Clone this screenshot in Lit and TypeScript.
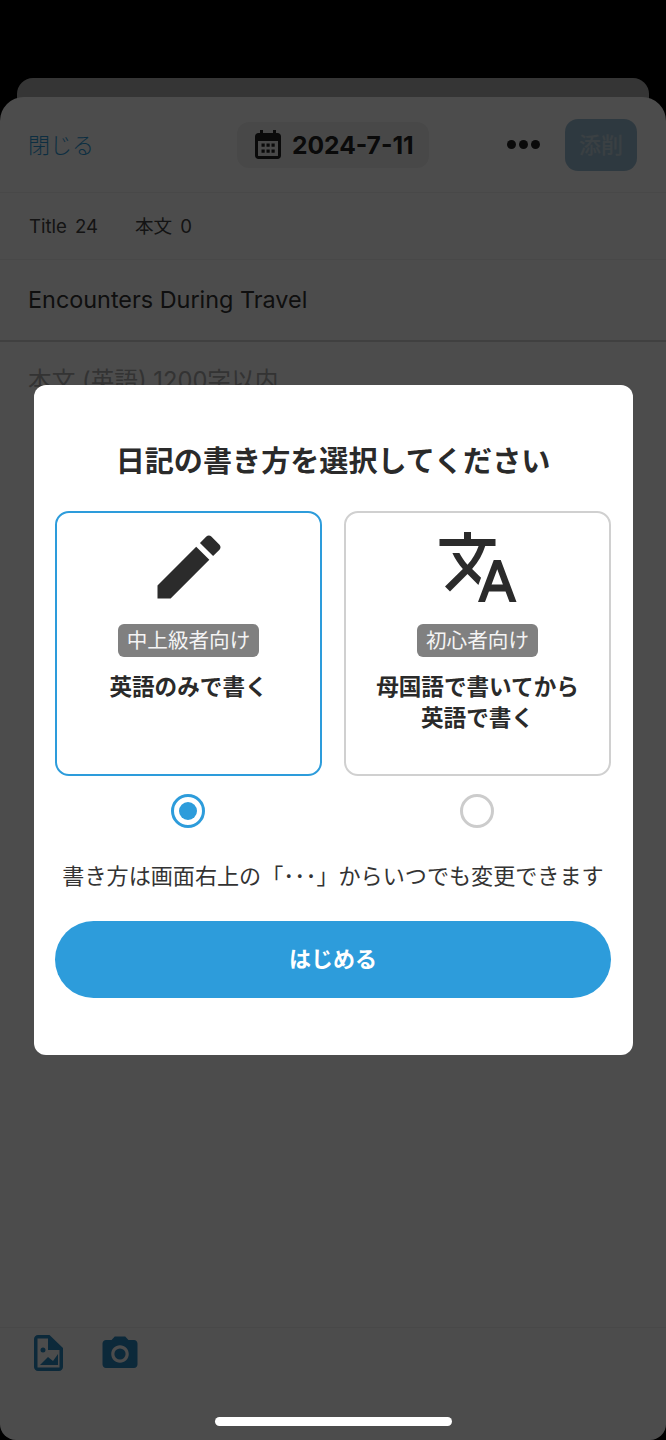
import {LitElement, html, css, svg} from 'lit';
import {customElement, state} from 'lit/decorators.js';
import {classMap} from 'lit/directives/class-map.js';

const editIcon = svg`<path d="M3 17.25V21h3.75L17.81 9.94l-3.75-3.75L3 17.25zM20.71 7.04c.39-.39.39-1.02 0-1.41l-2.34-2.34c-.39-.39-1.02-.39-1.41 0l-1.83 1.83 3.75 3.75 1.83-1.83z"/>`;
const translateIcon = svg`<path d="M12.87 15.07l-2.54-2.51.03-.03c1.74-1.94 2.98-4.17 3.71-6.53H17V4h-7V2H8v2H1v1.99h11.17C11.5 7.92 10.44 9.75 9 11.35 8.07 10.32 7.3 9.19 6.69 8h-2c.73 1.63 1.73 3.17 2.98 4.56l-5.09 5.02L4 19l5-5 3.11 3.11.76-2.04zM18.5 10h-2L12 22h2l1.12-3h4.75L21 22h2l-4.5-12zm-2.62 7l1.62-4.33L19.12 17h-3.24z"/>`;

const options = [
  {id: 'english', badge: '中上級者向け', label: ['英語のみで書く'], icon: editIcon},
  {id: 'native', badge: '初心者向け', label: ['母国語で書いてから', '英語で書く'], icon: translateIcon},
];

@customElement('app-root')
export class AppRoot extends LitElement {
  @state()
  selected = 'english';

  static styles = css`
    :host {
      display: block;
      font-family: Inter, "Noto Sans CJK JP", sans-serif;
      color: #222;
    }
    .stage {
      position: relative;
      height: 1440px;
      padding-top: 78px;
      box-sizing: border-box;
      background: #000;
      overflow: hidden;
    }
    .back-card {
      height: 40px;
      margin: 0 17px -21px;
      border-radius: 16px 16px 0 0;
      background: #b2b2b2;
    }
    .sheet {
      display: flex;
      flex-direction: column;
      height: 1343px;
      border-radius: 24px 24px 16px 16px;
      background: #fff;
    }
    .header {
      display: flex;
      align-items: center;
      height: 96px;
      padding: 0 29px 0 28px;
      border-bottom: 1px solid #f0f0f0;
      box-sizing: border-box;
    }
    .close {
      width: 209px;
      padding-bottom: 4px;
      font-size: 22px;
      font-weight: 300;
      color: #2d9cdb;
    }
    .date {
      display: flex;
      align-items: center;
      gap: 11px;
      width: 192px;
      height: 46px;
      padding-left: 18px;
      border-radius: 12px;
      box-sizing: border-box;
      background: #f2f2f2;
      font-size: 24.6px;
      font-weight: 700;
    }
    .date svg {
      width: 26px;
      height: 29px;
      fill: #222;
    }
    .dots {
      display: flex;
      gap: 3px;
      margin-left: 78px;
    }
    .dots i {
      width: 9px;
      height: 9px;
      border-radius: 50%;
      background: #222;
    }
    .submit {
      display: flex;
      align-items: center;
      justify-content: center;
      width: 72px;
      height: 52px;
      margin-left: 25px;
      padding-bottom: 3px;
      border-radius: 13px;
      box-sizing: border-box;
      background: #9cc0d6;
      color: #c4d6e0;
      font-size: 22px;
      font-weight: 500;
    }
    .counts {
      display: flex;
      align-items: center;
      gap: 37px;
      height: 66px;
      padding: 0 29px;
      border-bottom: 1px solid #f0f0f0;
      font-size: 18.6px;
      line-height: 20px;
      color: #444;
    }
    .counts span {
      display: flex;
      align-items: baseline;
      gap: 8px;
    }
    .title-row {
      display: flex;
      align-items: center;
      height: 82px;
      padding: 0 28px 2px;
      border-bottom: 2px solid #d8d8d8;
      box-sizing: border-box;
      font-size: 23.4px;
      color: #333;
    }
    .placeholder {
      padding: 20px 28px;
      font-size: 23.7px;
      white-space: nowrap;
      color: #aaa;
    }
    .footer {
      display: flex;
      gap: 36px;
      height: 113px;
      margin-top: auto;
      padding: 7px 34px 0;
      border-top: 1px solid #f0f0f0;
      box-sizing: border-box;
    }
    .footer svg {
      fill: #2a8ac4;
    }
    .footer .camera {
      margin-top: -2px;
    }
    .overlay {
      position: absolute;
      inset: 0;
      display: flex;
      align-items: center;
      justify-content: center;
      padding-left: 1px;
      background: rgba(0, 0, 0, 0.7);
    }
    .modal {
      width: 599px;
      height: 670px;
      padding: 0 22px 0 21px;
      border-radius: 12px;
      box-sizing: border-box;
      background: #fff;
    }
    .modal h2 {
      margin: 0 -10px;
      padding-top: 56px;
      height: 126px;
      box-sizing: border-box;
      font-size: 29.1px;
      line-height: 42px;
      font-weight: 700;
      text-align: center;
      color: #2a2a2a;
    }
    .choices {
      display: grid;
      grid-template-columns: 267px 267px;
      column-gap: 22px;
    }
    .choice {
      display: flex;
      flex-direction: column;
      align-items: center;
    }
    .card {
      display: flex;
      flex-direction: column;
      align-items: center;
      width: 100%;
      height: 265px;
      padding-top: 12px;
      border: 2px solid #d0d0d0;
      border-radius: 14px;
      box-sizing: border-box;
    }
    .selected .card {
      border-color: #2d9cdb;
    }
    .card svg {
      width: 84px;
      height: 84px;
      fill: #2b2b2b;
    }
    .badge {
      margin-top: 15px;
      padding: 0 9px;
      height: 33px;
      border-radius: 6px;
      background: #808080;
      color: #f4f4f4;
      font-size: 20.6px;
      line-height: 33px;
    }
    .label {
      margin-top: 14px;
      font-size: 22.6px;
      line-height: 31px;
      font-weight: 700;
      text-align: center;
      color: #2a2a2a;
    }
    .radio {
      width: 34px;
      height: 34px;
      margin: 18px 1px 0 0;
      border: 3px solid #ccc;
      border-radius: 50%;
      box-sizing: border-box;
      display: flex;
      align-items: center;
      justify-content: center;
    }
    .selected .radio {
      border-color: #2d9cdb;
    }
    .selected .radio::after {
      content: "";
      width: 18px;
      height: 18px;
      border-radius: 50%;
      background: #2d9cdb;
    }
    .hint {
      margin: 33px -10px 0;
      font-size: 22.1px;
      line-height: 30px;
      color: #333;
      text-align: center;
      white-space: nowrap;
    }
    .start {
      display: flex;
      align-items: center;
      justify-content: center;
      height: 77px;
      margin-top: 30px;
      padding-bottom: 6px;
      border-radius: 39px;
      box-sizing: border-box;
      background: #2d9cdb;
      color: #fff;
      font-size: 22px;
      font-weight: 700;
    }
    .home {
      position: absolute;
      left: 215px;
      bottom: 14px;
      width: 237px;
      height: 9px;
      border-radius: 5px;
      background: #fff;
    }
    .num {
      font-weight: 400;
    }
  `;

  renderChoice(o: (typeof options)[number]) {
    return html`
      <div class="choice ${classMap({selected: this.selected === o.id})}">
        <div class="card">
          <svg viewBox="0 0 24 24">${o.icon}</svg>
          <div class="badge">${o.badge}</div>
          <div class="label">${o.label.map((l) => html`<div>${l}</div>`)}</div>
        </div>
        <div class="radio"></div>
      </div>
    `;
  }

  override render() {
    return html`
      <div class="stage">
        <div class="back-card"></div>
        <div class="sheet">
          <div class="header">
            <div class="close">閉じる</div>
            <div class="date">
              <svg viewBox="0 0 26 29"><path fill-rule="evenodd" d="M5 0h3v3h10V0h3v3h1.500C24.500 3 26 4.500 26 6.500v19c0 2-1.500 3.500-3.500 3.500h-19C1.500 29 0 27.500 0 25.500v-19C0 4.500 1.500 3 3.500 3H5zM3 11v14.500c0 .4.200.6.600.6h18.800c.4 0 .6-.2.600-.6V11zM6.500 13.500h3.200v3.200H6.500zm5 0h3.200v3.200h-3.200zm5 0h3.200v3.200h-3.200zM6.500 19.500h3.200v3.200H6.500zm5 0h3.200v3.200h-3.200zm5 0h3.200v3.200h-3.200z"/></svg>
              2024-7-11
            </div>
            <div class="dots"><i></i><i></i><i></i></div>
            <div class="submit">添削</div>
          </div>
          <div class="counts">
            <span>Title<span class="num">24</span></span>
            <span>本文<span class="num">0</span></span>
          </div>
          <div class="title-row">Encounters During Travel</div>
          <div class="placeholder">本文 (英語) 1200字以内</div>
          <div class="footer">
            <svg width="29" height="36" viewBox="0 0 29 36"><path fill-rule="evenodd" d="M4 0h11.500L29 13v19c0 2.200-1.800 4-4 4H4c-2.200 0-4-1.800-4-4V4c0-2.200 1.800-4 4-4zm-.500 3.500v29h22V15H14V3.500zM9 12.500a2.500 2.500 0 1 1 0 5 2.500 2.500 0 0 1 0-5zM6 30l8-8 5 4 5-7v11z"/></svg>
            <svg class="camera" width="42" height="42" viewBox="0 0 24 24"><path d="M9 2L7.170 4H4c-1.100 0-2 .9-2 2v12c0 1.100.9 2 2 2h16c1.100 0 2-.9 2-2V6c0-1.100-.9-2-2-2h-3.170L15 2H9zm3 15c-2.760 0-5-2.240-5-5s2.240-5 5-5 5 2.240 5 5-2.240 5-5 5z"/><circle cx="12" cy="12" r="3.200"/></svg>
          </div>
        </div>
        <div class="overlay">
          <div class="modal">
            <h2>日記の書き方を選択してください</h2>
            <div class="choices">${options.map((o) => this.renderChoice(o))}</div>
            <div class="hint">書き方は画面右上の「･･･」からいつでも変更できます</div>
            <div class="start">はじめる</div>
          </div>
        </div>
        <div class="home"></div>
      </div>
    `;
  }
}
